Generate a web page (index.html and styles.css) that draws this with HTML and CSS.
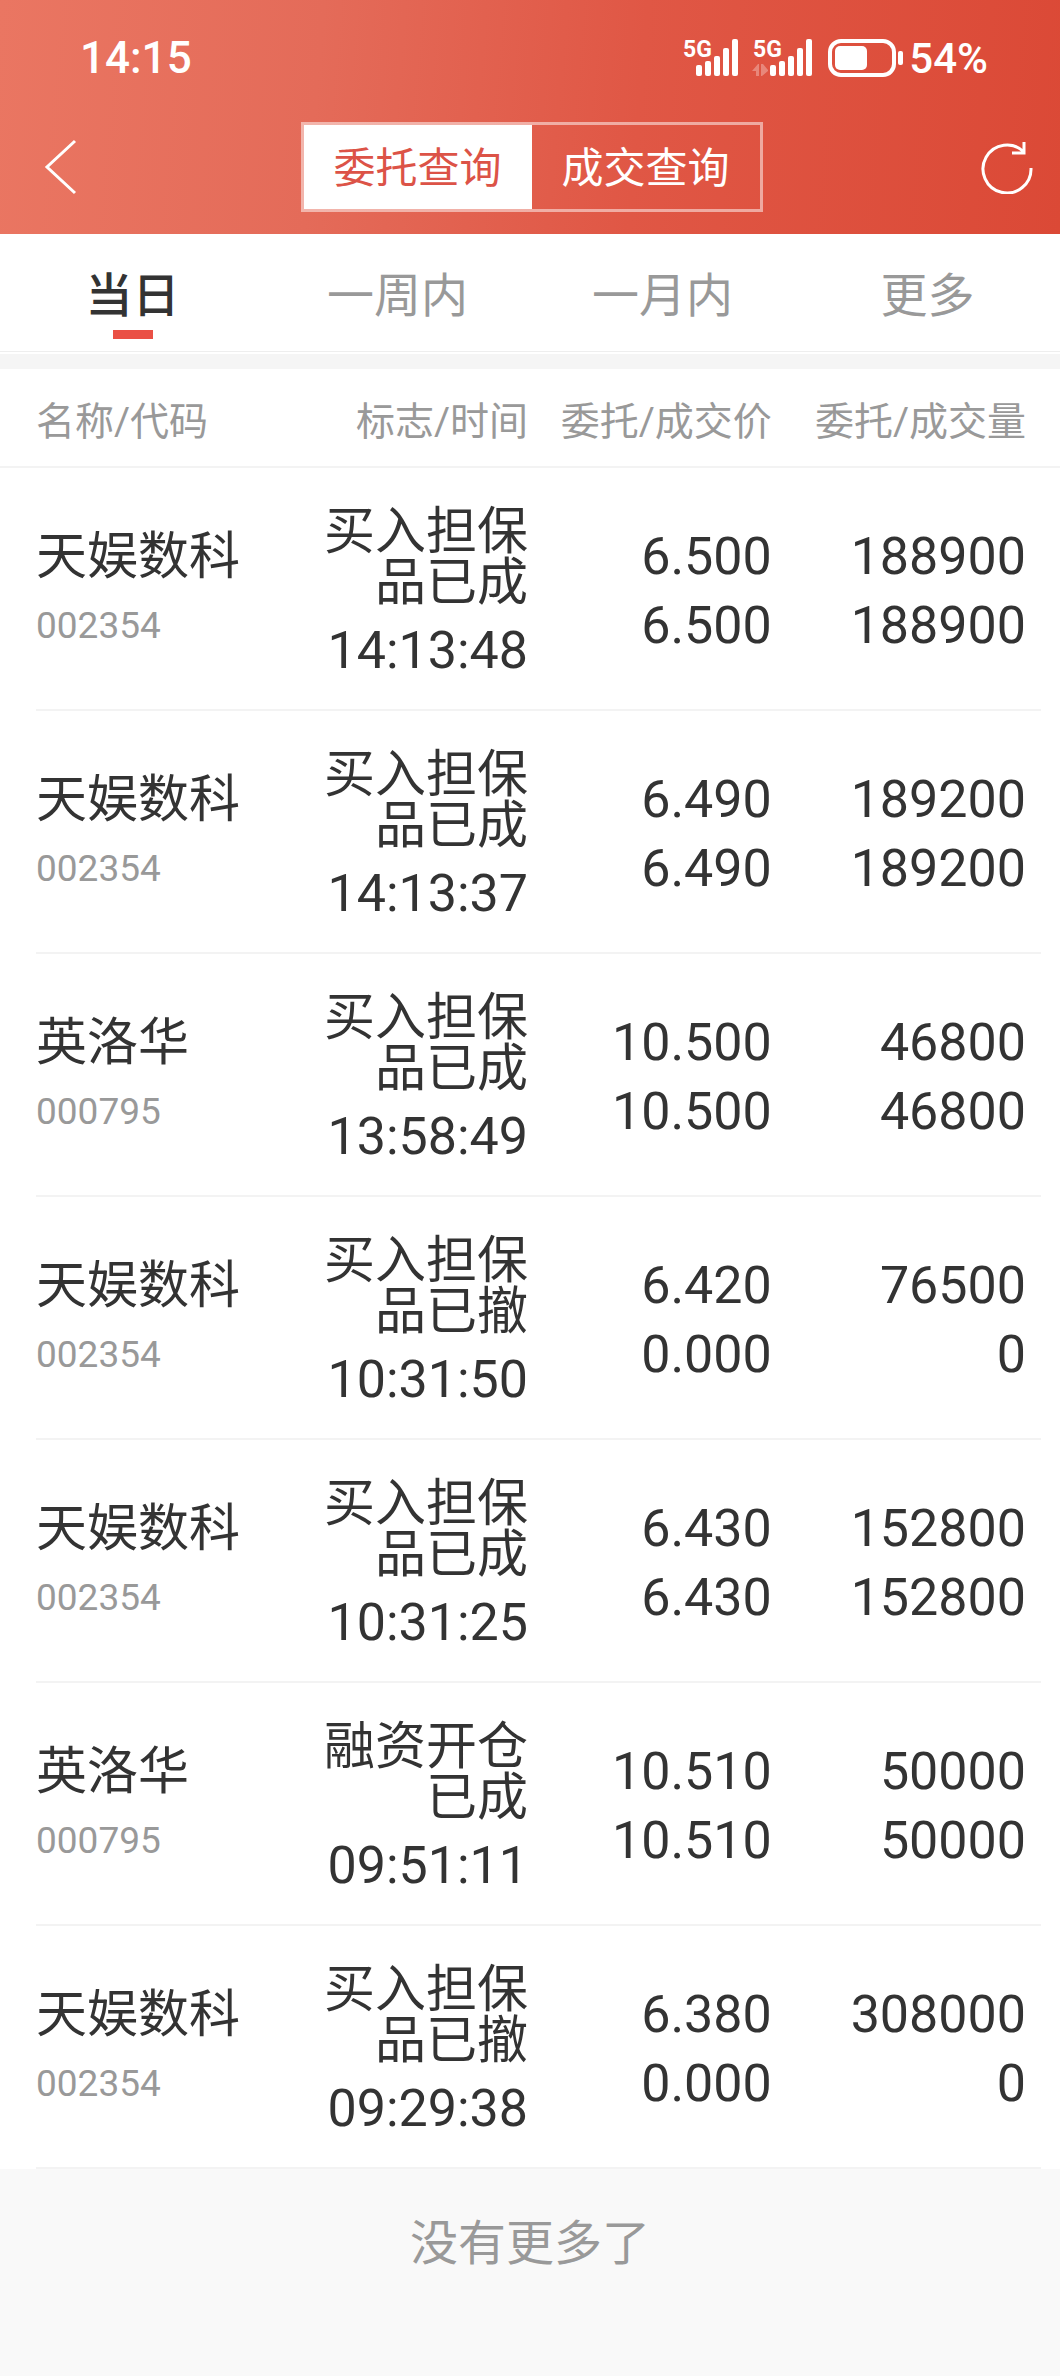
FILE: index.html
```html
<!DOCTYPE html>
<html lang="zh-CN">
<head>
  <meta charset="UTF-8">
  <meta name="viewport" content="width=device-width, initial-scale=1">
  <title>委托查询</title>
  <link rel="stylesheet" href="styles.css">
</head>
<body>
  <header class="header">
    <div class="status-bar">
      <span>14:15</span>
      <div class="status-icons">
        <svg class="signal" width="57" height="60" viewBox="0 -10 57 60" fill="#fff">
          <text x="1" y="19" class="net">5G</text>
          <rect x="14" y="27" width="6" height="11" rx="2"/>
          <rect x="23" y="23" width="6" height="15" rx="2"/>
          <rect x="32" y="18" width="6" height="20" rx="2"/>
          <rect x="41" y="10" width="6" height="28" rx="2"/>
          <rect x="50" y="1" width="6" height="37" rx="2"/>
        </svg>
        <svg class="signal" width="62" height="60" viewBox="0 -10 62 60" fill="#fff">
          <text x="1" y="19" class="net">5G</text>
          <path d="M0 33l6-7h1v12H4v-5zM16 33l-6 5H9V26h2l5 6z" opacity=".3"/>
          <rect x="18" y="27" width="6" height="11" rx="2"/>
          <rect x="27" y="23" width="6" height="15" rx="2"/>
          <rect x="36" y="18" width="6" height="20" rx="2"/>
          <rect x="45" y="10" width="6" height="28" rx="2"/>
          <rect x="54" y="1" width="6" height="37" rx="2"/>
        </svg>
        <svg class="battery" width="78" height="40" viewBox="0 0 78 40" fill="#fff">
          <rect x="3" y="3" width="64" height="34" rx="11" fill="none" stroke="#fff" stroke-width="4"/>
          <rect x="8" y="8" width="32" height="24" rx="5"/>
          <rect x="71" y="13" width="5" height="14" rx="2"/>
        </svg>
        <span class="percent">54%</span>
      </div>
    </div>
    <nav class="nav">
      <button class="icon-btn" aria-label="返回">
        <svg width="38" height="56" viewBox="0 0 38 56" fill="none" stroke="#fff" stroke-width="3"><path d="M31 2L3 28l28 26"/></svg>
      </button>
      <div class="segment">
        <button class="segment-item active">委托查询</button>
        <button class="segment-item">成交查询</button>
      </div>
      <button class="icon-btn" aria-label="刷新">
        <svg width="52" height="54" viewBox="0 0 52 54" fill="none" stroke="#fff" stroke-width="3"><path d="M50 28A24 24 0 1 1 43 12M43 2v11H31"/></svg>
      </button>
    </nav>
  </header>

  <div class="tabs">
    <button class="tab active">当日</button>
    <button class="tab">一周内</button>
    <button class="tab">一月内</button>
    <button class="tab">更多</button>
  </div>
  <div class="gap"></div>

  <table class="orders">
    <thead>
      <tr>
        <th class="col-name">名称/代码</th>
        <th class="col-flag">标志/时间</th>
        <th class="col-price">委托/成交价</th>
        <th class="col-amount">委托/成交量</th>
      </tr>
    </thead>
    <tbody>
      <tr>
        <td><div class="name">天娱数科</div><div class="code">002354</div></td>
        <td class="flag"><div class="type">买入担保品已成</div><div class="time">14:13:48</div></td>
        <td><div>6.500</div><div>6.500</div></td>
        <td><div>188900</div><div>188900</div></td>
      </tr>
      <tr>
        <td><div class="name">天娱数科</div><div class="code">002354</div></td>
        <td class="flag"><div class="type">买入担保品已成</div><div class="time">14:13:37</div></td>
        <td><div>6.490</div><div>6.490</div></td>
        <td><div>189200</div><div>189200</div></td>
      </tr>
      <tr>
        <td><div class="name">英洛华</div><div class="code">000795</div></td>
        <td class="flag"><div class="type">买入担保品已成</div><div class="time">13:58:49</div></td>
        <td><div>10.500</div><div>10.500</div></td>
        <td><div>46800</div><div>46800</div></td>
      </tr>
      <tr>
        <td><div class="name">天娱数科</div><div class="code">002354</div></td>
        <td class="flag"><div class="type">买入担保品已撤</div><div class="time">10:31:50</div></td>
        <td><div>6.420</div><div>0.000</div></td>
        <td><div>76500</div><div>0</div></td>
      </tr>
      <tr>
        <td><div class="name">天娱数科</div><div class="code">002354</div></td>
        <td class="flag"><div class="type">买入担保品已成</div><div class="time">10:31:25</div></td>
        <td><div>6.430</div><div>6.430</div></td>
        <td><div>152800</div><div>152800</div></td>
      </tr>
      <tr>
        <td><div class="name">英洛华</div><div class="code">000795</div></td>
        <td class="flag"><div class="type">融资开仓已成</div><div class="time">09:51:11</div></td>
        <td><div>10.510</div><div>10.510</div></td>
        <td><div>50000</div><div>50000</div></td>
      </tr>
      <tr>
        <td><div class="name">天娱数科</div><div class="code">002354</div></td>
        <td class="flag"><div class="type">买入担保品已撤</div><div class="time">09:29:38</div></td>
        <td><div>6.380</div><div>0.000</div></td>
        <td><div>308000</div><div>0</div></td>
      </tr>
    </tbody>
  </table>

  <div class="no-more">没有更多了</div>
</body>
</html>
```
FILE: styles.css
```css
* {margin: 0; padding: 0; box-sizing: border-box;}
body {background-color: #f9f9f9; color: #333; font-family: Roboto, "Noto Sans CJK SC", sans-serif;}
button {background: none; border: none; font-family: inherit; color: inherit; cursor: pointer;}
svg {display: block;}

.header {background: linear-gradient(95deg, #ea7662 0%, #e46b59 30%, #e05745 60%, #db4936 100%); color: #fff;}
.status-bar {display: flex; align-items: center; justify-content: space-between; height: 116px; padding: 0 72px 0 80px; font-size: 44px; font-weight: 500;}
.status-icons {display: flex; align-items: center;}
.signal {margin-right: 13px;}
.battery {margin-right: 4px;}
.percent {font-size: 42px;}
.net {font-size: 23px; font-weight: 700;}
.nav {display: flex; align-items: center; justify-content: space-between; height: 118px; padding: 0 27px 16px 44px;}
.icon-btn {display: flex; align-items: center;}
.segment {display: flex; height: 90px; border: 3px solid rgba(255,255,255,0.5); background-clip: padding-box;}
.segment-item {width: 228px; padding-bottom: 6px; font-size: 42px;}
.segment-item.active {background-color: #fff; color: #dc5347;}

.tabs {display: flex; height: 118px; background-color: #fff; border-bottom: 1px solid #eee;}
.tab {flex: 1; display: flex; flex-direction: column; align-items: center; padding-top: 28px; font-size: 47px; line-height: 68px; color: #999;}
.tab.active {color: #333; font-weight: 500;}
.tab.active::after {content: ""; width: 40px; height: 9px; background-color: #ea5045;}
.gap {height: 17px; border-top: 2px solid #fff; background-color: #f5f5f5;}

.orders {width: 100%; table-layout: fixed; border-spacing: 0; background-color: #fff;}
.orders th {height: 99px; font-size: 39px; font-weight: 400; color: #999; text-align: right; white-space: nowrap; padding-right: 2px; border-bottom: 2px solid #f3f3f3;}
.orders td {height: 243px; font-size: 52px; line-height: 69px; text-align: right; vertical-align: middle; padding: 2px 2px 0 0;}
.orders th:first-child, .orders td:first-child {text-align: left; padding-left: 36px;}
.orders th:last-child, .orders td:last-child {padding-right: 34px;}
.orders tbody tr {background: linear-gradient(#f3f3f3, #f3f3f3) no-repeat 36px 100% / calc(100% - 55px) 2px;}
.col-name {width: 28%;}
.col-flag {width: 22%;}
.col-price {width: 23%;}
.col-amount {width: 27%;}
.name {font-size: 51px;}
.orders .code {font-size: 37px; color: #999;}
.orders .flag {padding-top: 11px;}
.type {font-size: 51px; line-height: 51px; margin-bottom: 8px;}

.no-more {padding: 40px 0 94px; font-size: 48px; line-height: 70px; text-align: center; color: #999;}
```
